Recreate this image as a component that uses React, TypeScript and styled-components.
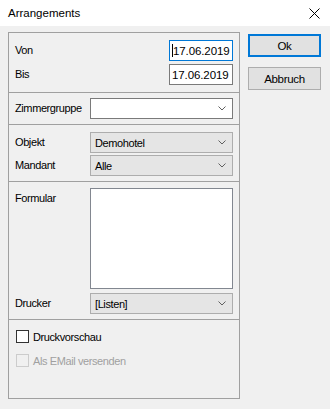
import styled, { createGlobalStyle } from 'styled-components'

const GlobalStyle = createGlobalStyle`
  html, body {
    margin: 0;
    padding: 0;
    background: #f0f0f0;
  }
  body {
    font-family: "Liberation Sans", Arial, sans-serif;
    font-size: 11px;
    letter-spacing: -0.4px;
    color: #000;
  }
`

const Window = styled.div`
  width: 330px;
  height: 409px;
  background: #f0f0f0;
  display: flex;
  flex-direction: column;
  overflow: hidden;
`

const TitleBar = styled.div`
  height: 26px;
  background: #ffffff;
  display: flex;
  align-items: center;
  justify-content: space-between;
  padding: 0 10px 0 8px;
  font-size: 11.5px;
  letter-spacing: 0;
`

const CloseIcon = styled.svg`
  width: 11px;
  height: 11px;
`

const Body = styled.div`
  display: flex;
  padding: 6px 8px 0 8px;
  gap: 8px;
`

const Panel = styled.div`
  width: 230px;
  height: 365px;
  border: 1px solid #a0a0a0;
  display: flex;
  flex-direction: column;
`

const Section = styled.div<{ $pt: number; $pb: number; $gap: number }>`
  display: grid;
  grid-template-columns: 75px 1fr;
  row-gap: ${({ $gap }) => $gap}px;
  padding: ${({ $pt, $pb }) => `${$pt}px 6px ${$pb}px 6px`};
  border-top: 1px solid #a0a0a0;
  align-content: start;

  &:first-child {
    border-top: none;
  }
`

const Label = styled.div<{ $top?: boolean }>`
  display: flex;
  align-items: ${({ $top }) => ($top ? 'flex-start' : 'center')};
  padding-top: ${({ $top }) => ($top ? '3px' : '0')};
  line-height: 15px;
  white-space: nowrap;
`

const DateInput = styled.div<{ $focused?: boolean }>`
  justify-self: end;
  box-sizing: border-box;
  width: 64px;
  height: 21px;
  border: 1px solid ${({ $focused }) => ($focused ? '#0078d7' : '#7a7a7a')};
  background: #fff;
  display: flex;
  align-items: center;
  padding-left: 2px;
  font-size: 11.5px;
  letter-spacing: -0.1px;
`

const Caret = styled.span`
  display: inline-block;
  width: 1px;
  height: 13px;
  background: #000;
`

const Combo = styled.div<{ $readonly?: boolean }>`
  box-sizing: border-box;
  height: 21px;
  border: 1px solid ${({ $readonly }) => ($readonly ? '#adadad' : '#7a7a7a')};
  background: ${({ $readonly }) => ($readonly ? '#e5e5e5' : '#ffffff')};
  display: flex;
  align-items: center;
  justify-content: space-between;
  padding: 0 6px 0 4px;
`

const Chevron = styled.svg`
  width: 8px;
  height: 5px;
`

const ListBox = styled.div`
  box-sizing: border-box;
  height: 101px;
  border: 1px solid #828790;
  background: #ffffff;
`

const CheckSection = styled.div`
  flex: 1;
  border-top: 1px solid #a0a0a0;
  padding: 10px 6px 0 7px;
  display: flex;
  flex-direction: column;
  gap: 11px;
`

const CheckRow = styled.label<{ $disabled?: boolean }>`
  display: flex;
  align-items: center;
  gap: 4px;
  height: 13px;
  color: ${({ $disabled }) => ($disabled ? '#a0a0a0' : '#000')};
`

const CheckBox = styled.span<{ $disabled?: boolean }>`
  width: 11px;
  height: 11px;
  border: 1px solid ${({ $disabled }) => ($disabled ? '#cccccc' : '#333333')};
  background: ${({ $disabled }) => ($disabled ? '#f0f0f0' : '#ffffff')};
`

const ButtonColumn = styled.div`
  display: flex;
  flex-direction: column;
  gap: 10px;
  padding-top: 2px;
`

const Button = styled.button<{ $default?: boolean }>`
  width: 73px;
  height: 23px;
  margin: 0;
  padding: 0;
  font-family: "Liberation Sans", Arial, sans-serif;
  font-size: 11.5px;
  letter-spacing: -0.3px;
  color: #000;
  background: #e1e1e1;
  border: ${({ $default }) => ($default ? '2px solid #0078d7' : '1px solid #adadad')};
`

function ComboBox({ value, readonly }: { value?: string; readonly?: boolean }) {
  return (
    <Combo $readonly={readonly}>
      <span>{value}</span>
      <Chevron viewBox="0 0 8 5">
        <path d="M0.5 0.5 L4 4 L7.5 0.5" fill="none" stroke="#606060" strokeWidth="1" />
      </Chevron>
    </Combo>
  )
}

export default function App() {
  return (
    <Window>
      <GlobalStyle />
      <TitleBar>
        <span>Arrangements</span>
        <CloseIcon viewBox="0 0 11 11">
          <path d="M0.5 0.5 L10.5 10.5 M10.5 0.5 L0.5 10.5" stroke="#000" strokeWidth="1" />
        </CloseIcon>
      </TitleBar>
      <Body>
        <Panel>
          <Section $pt={7} $pb={7} $gap={3}>
            <Label>Von</Label>
            <DateInput $focused>
              <Caret />
              17.06.2019
            </DateInput>
            <Label>Bis</Label>
            <DateInput>17.06.2019</DateInput>
          </Section>
          <Section $pt={5} $pb={5} $gap={0}>
            <Label>Zimmergruppe</Label>
            <ComboBox />
          </Section>
          <Section $pt={7} $pb={5} $gap={2}>
            <Label>Objekt</Label>
            <ComboBox value="Demohotel" readonly />
            <Label>Mandant</Label>
            <ComboBox value="Alle" readonly />
          </Section>
          <Section $pt={6} $pb={5} $gap={4}>
            <Label $top>Formular</Label>
            <ListBox />
            <Label>Drucker</Label>
            <ComboBox value="[Listen]" readonly />
          </Section>
          <CheckSection>
            <CheckRow>
              <CheckBox />
              Druckvorschau
            </CheckRow>
            <CheckRow $disabled>
              <CheckBox $disabled />
              Als EMail versenden
            </CheckRow>
          </CheckSection>
        </Panel>
        <ButtonColumn>
          <Button $default>Ok</Button>
          <Button>Abbruch</Button>
        </ButtonColumn>
      </Body>
    </Window>
  )
}
